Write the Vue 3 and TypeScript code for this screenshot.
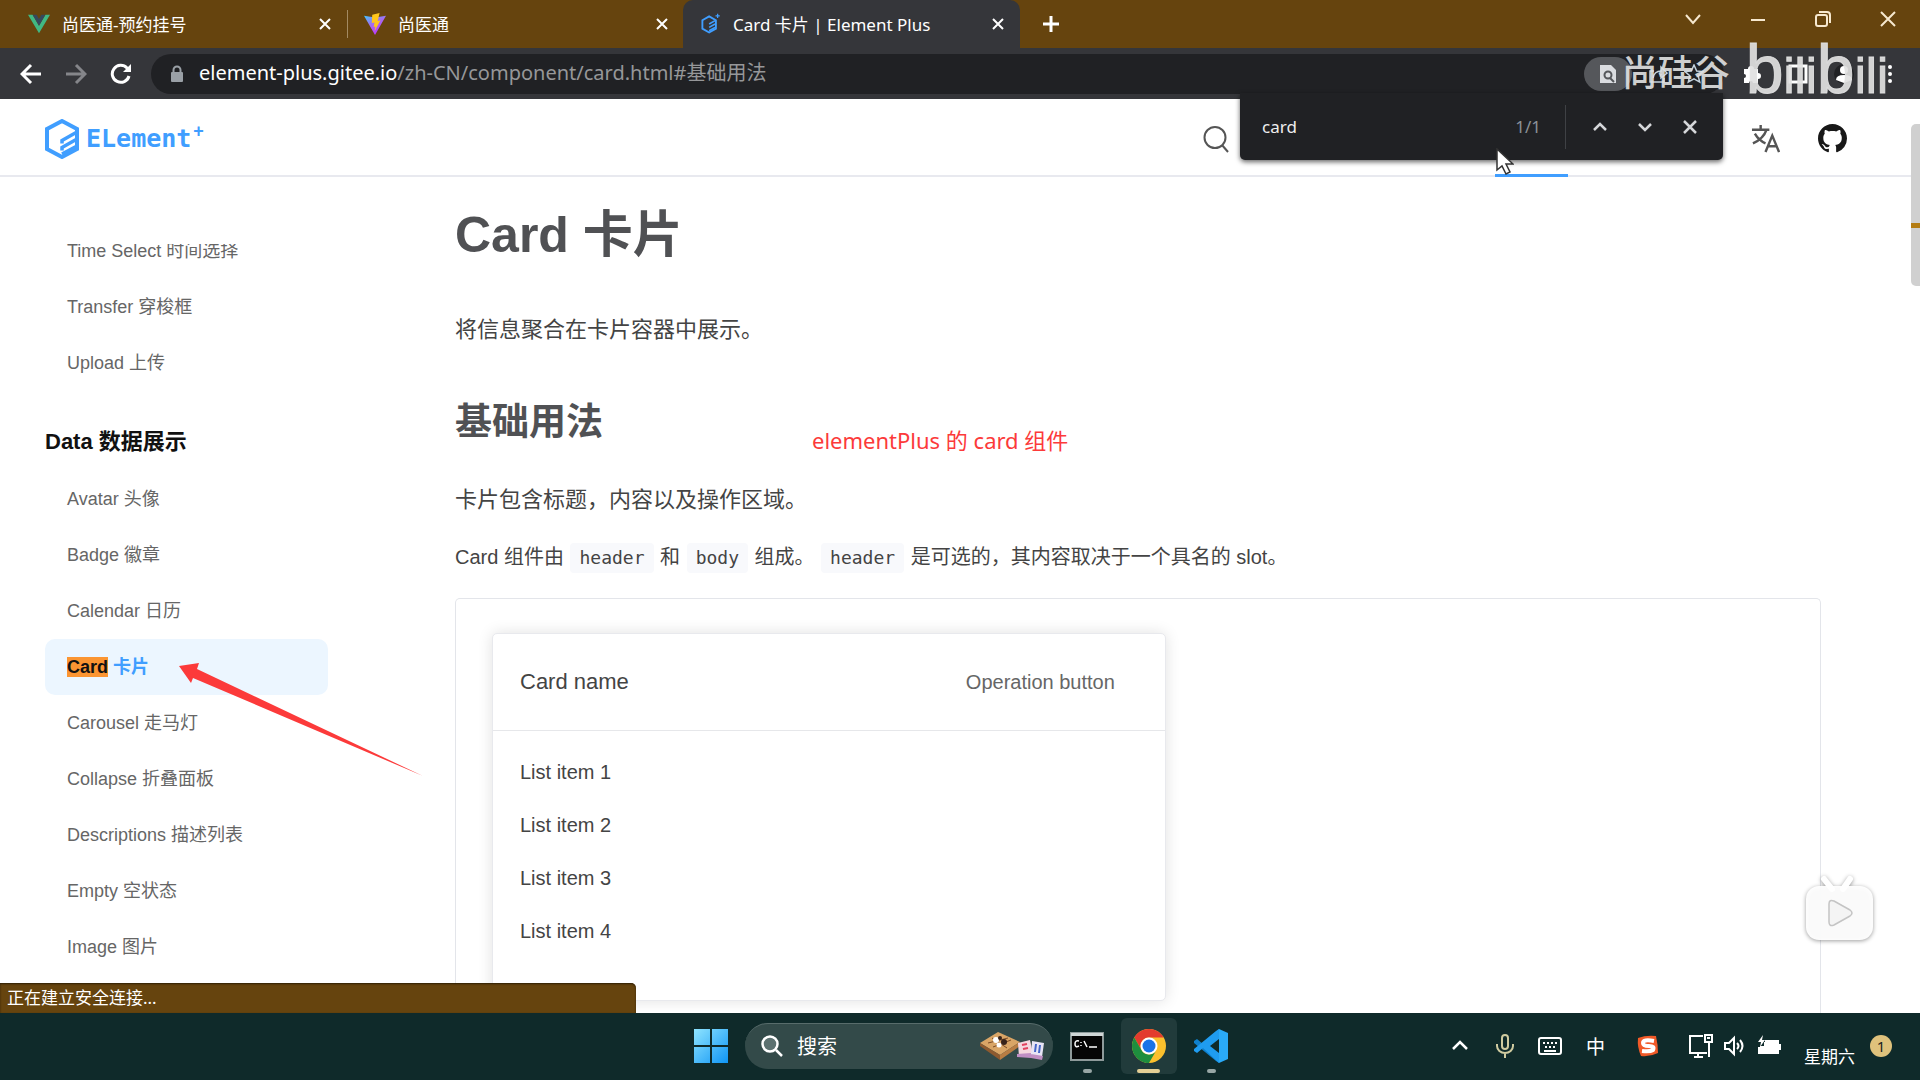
<script setup lang="ts">
import { ref } from 'vue'

interface MenuItem {
  name: string
  label: string
}

const formItems: MenuItem[] = [
  { name: 'Time Select', label: '时间选择' },
  { name: 'Transfer', label: '穿梭框' },
  { name: 'Upload', label: '上传' },
]

const dataItems: MenuItem[] = [
  { name: 'Avatar', label: '头像' },
  { name: 'Badge', label: '徽章' },
  { name: 'Calendar', label: '日历' },
  { name: 'Card', label: '卡片' },
  { name: 'Carousel', label: '走马灯' },
  { name: 'Collapse', label: '折叠面板' },
  { name: 'Descriptions', label: '描述列表' },
  { name: 'Empty', label: '空状态' },
  { name: 'Image', label: '图片' },
]

const active = ref('Card')
const keyword = ref('card')
const taskQuery = ref('')
const listCount = 4
</script>

<template>
  <div class="desktop">
    <!-- tab strip -->
    <header class="tabs">
      <div class="tab first">
        <svg class="fav" viewBox="0 0 24 22"><path d="M0 1h5l7 12 7-12h5L12 21z" fill="#41b883" /><path d="M5 1h4.500l2.500 4.500L14.500 1H19l-7 12z" fill="#35495e" /></svg>
        <span class="tab-title">尚医通-预约挂号</span>
        <button class="tab-close" aria-label="关闭标签页"><svg viewBox="0 0 12 12"><path d="M1 1l10 10M11 1L1 11" /></svg></button>
      </div>
      <div class="tab second">
        <svg class="fav" viewBox="0 0 24 24">
          <defs>
            <linearGradient id="vite" x1="0" y1="0" x2=".6" y2="1"><stop offset="0" stop-color="#41c8ff" /><stop offset=".5" stop-color="#a66bf0" /><stop offset="1" stop-color="#bd34fe" /></linearGradient>
          </defs>
          <path d="M0 3l12 2 12-2-12 21z" fill="url(#vite)" /><path d="M17 0L9 2l-.5 9 3-.7-1 5 2-.5-1 5L18 8l-3 .6z" fill="#ffc61c" />
        </svg>
        <span class="tab-title">尚医通</span>
        <button class="tab-close" aria-label="关闭标签页"><svg viewBox="0 0 12 12"><path d="M1 1l10 10M11 1L1 11" /></svg></button>
      </div>
      <div class="tab current">
        <svg class="fav" viewBox="0 0 24 26" fill="none" stroke="#409eff">
          <path d="M11 4L3 8.500v10L11 23l8-4.500v-10z" stroke-width="2.200" /><path d="M18 9l-7 4M18 13l-7 4M18 17l-7 4" stroke-width="2" /><path d="M21 1v5M18.500 3.500h5" stroke-width="1.500" />
        </svg>
        <span class="tab-title">Card 卡片 | Element Plus</span>
        <button class="tab-close" aria-label="关闭标签页"><svg viewBox="0 0 12 12"><path d="M1 1l10 10M11 1L1 11" /></svg></button>
      </div>
      <button class="new-tab" aria-label="新标签页"><svg viewBox="0 0 18 18"><path d="M9 1v16M1 9h16" /></svg></button>
      <div class="window-controls">
        <button aria-label="搜索标签页"><svg viewBox="0 0 16 16"><path d="M1 4l7 8 7-8" /></svg></button>
        <button aria-label="最小化"><svg viewBox="0 0 16 16"><path d="M1 9h14" /></svg></button>
        <button aria-label="还原"><svg viewBox="0 0 16 16"><rect x="1" y="4" width="11" height="11" rx="2" /><path d="M4 1h8q3 0 3 3v8" /></svg></button>
        <button aria-label="关闭"><svg viewBox="0 0 16 16"><path d="M1 1l14 14M15 1L1 15" /></svg></button>
      </div>
    </header>

    <!-- address bar -->
    <div class="toolbar">
      <button class="nav" aria-label="后退"><svg viewBox="0 0 22 22"><path d="M21 11H3M11 2l-9 9 9 9" /></svg></button>
      <button class="nav dim" aria-label="前进"><svg viewBox="0 0 22 22"><path d="M1 11h18M11 2l9 9-9 9" /></svg></button>
      <button class="nav" aria-label="重新加载"><svg viewBox="0 0 22 22"><path d="M19 13a8.500 8.500 0 1 1-2-8l2 2" /><path d="M21 1v8h-8z" fill="#fff" stroke="none" /></svg></button>
      <div class="address">
        <svg class="lock" viewBox="0 0 14 18"><path d="M3.500 8V5a3.500 3.500 0 0 1 7 0v3" fill="none" stroke="#9aa0a6" stroke-width="2" /><rect x="1" y="7" width="12" height="10" rx="1" fill="#9aa0a6" /></svg>
        <span class="url"><b>element-plus.gitee.io</b>/zh-CN/component/card.html#基础用法</span>
        <div class="address-tools">
          <span class="find-chip"><svg viewBox="0 0 18 20"><path d="M1 1h11l5 5v13H1z" fill="#dadce0" /><circle cx="9" cy="11" r="3.500" fill="none" stroke="#55575b" stroke-width="2" /><path d="M11 14l4 4" stroke="#55575b" stroke-width="2" /></svg></span>
          <svg class="tool" viewBox="0 0 20 20"><path d="M6 7H2v11h14v-4M5 14c1-5 4-7 8-7V3l6 6-6 5v-4" /></svg>
          <svg class="tool" viewBox="0 0 20 20"><path d="M10 1l2.700 6 6.300.6-4.800 4.200 1.500 6.300L10 14.800 4.300 18l1.500-6.200L1 7.600 7.300 7z" /></svg>
        </div>
      </div>
      <div class="extensions">
        <svg viewBox="0 0 20 20"><path d="M2 5h4a3 3 0 0 1 6 0h4v4a3 3 0 0 1 0 6v4h-5a2 2 0 0 0-4 0H2v-5a2 2 0 0 0 0-4z" fill="#fff" /></svg>
        <svg viewBox="0 0 20 20"><path d="M2 2h16v16H2z" fill="none" stroke="#fff" stroke-width="3" /></svg>
        <svg viewBox="0 0 20 20"><circle cx="10" cy="10" r="10" fill="#202124" /><circle cx="10" cy="6" r="4" fill="#fff" /><path d="M2 16q0-5 8-5t8 5l-8 3z" fill="#fff" /></svg>
        <svg viewBox="0 0 20 20" fill="#fff"><circle cx="10" cy="3" r="2" /><circle cx="10" cy="10" r="2" /><circle cx="10" cy="17" r="2" /></svg>
      </div>
    </div>

    <!-- document -->
    <div class="page">
      <header class="site-header">
        <a class="brand" href="#">
          <svg class="mark" viewBox="0 0 36 40" fill="none" stroke="#409eff">
            <path d="M33 30l-15 8L3 30V10l15-8 15 8z" stroke-width="4" /><path d="M33 13l-15 8.500v3M33 20l-15 8.500v3M33 27l-15 8" stroke-width="3.500" />
          </svg>
          <span class="word">ELement</span><sup class="plus">+</sup>
        </a>
        <nav class="site-nav">
          <button class="icon-button search" aria-label="搜索"><svg viewBox="0 0 26 28"><circle cx="12" cy="12.500" r="10.500" /><path d="M19 20l6 7" /></svg></button>
          <a class="nav-current" href="#" aria-label="组件"></a>
          <button class="icon-button" aria-label="语言"><svg viewBox="0 0 30 30"><path d="M1 6h18M10 1v5M16 6Q13 15 2 20M4 10q4 7 11 10" stroke-width="2.500" /><path d="M15 29l7-17 7 17M18 23h8" stroke-width="2.500" /></svg></button>
          <a class="icon-button" href="#" aria-label="GitHub"><svg viewBox="0 0 16 16"><path stroke="none" fill="#181818" d="M8 0C3.580 0 0 3.580 0 8c0 3.540 2.290 6.530 5.470 7.590.4.070.55-.17.55-.38 0-.19-.01-.82-.01-1.490-2.010.37-2.530-.49-2.690-.94-.09-.23-.48-.94-.82-1.130-.28-.15-.68-.52-.01-.53.63-.01 1.080.58 1.230.82.72 1.210 1.870.87 2.330.66.07-.52.28-.87.51-1.070-1.780-.2-3.640-.89-3.640-3.950 0-.87.31-1.590.82-2.150-.08-.2-.36-1.020.08-2.120 0 0 .67-.21 2.200.82.64-.18 1.320-.27 2-.27s1.360.09 2 .27c1.530-1.040 2.200-.82 2.200-.82.44 1.100.16 1.920.08 2.120.51.56.82 1.270.82 2.150 0 3.070-1.870 3.750-3.650 3.950.29.25.54.73.54 1.480 0 1.070-.01 1.930-.01 2.200 0 .21.15.46.55.38A8.010 8.010 0 0 0 16 8c0-4.420-3.580-8-8-8z" /></svg></a>
        </nav>
      </header>

      <div class="columns">
        <aside class="sidebar">
          <ul class="menu lead">
            <li v-for="item in formItems" :key="item.name"><a href="#">{{ item.name }} {{ item.label }}</a></li>
          </ul>
          <h4 class="group">Data 数据展示</h4>
          <ul class="menu">
            <li v-for="item in dataItems" :key="item.name">
              <a v-if="item.name === active" class="active" href="#"><mark>{{ item.name }}</mark> {{ item.label }}</a>
              <a v-else href="#" @click.prevent="active = item.name">{{ item.name }} {{ item.label }}</a>
            </li>
          </ul>
        </aside>

        <main class="content">
          <h1>Card 卡片</h1>
          <p class="lede">将信息聚合在卡片容器中展示。</p>
          <h2>基础用法</h2>
          <p class="lede">卡片包含标题，内容以及操作区域。</p>
          <p class="note">Card 组件由 <code>header</code> 和 <code>body</code> 组成。 <code>header</code> 是可选的，其内容取决于一个具名的 slot。</p>
          <section class="demo">
            <article class="card">
              <div class="card-header">
                <span class="card-name">Card name</span>
                <button class="operation">Operation button</button>
              </div>
              <div class="card-body">
                <div v-for="n in listCount" :key="n" class="row">List item {{ n }}</div>
              </div>
            </article>
          </section>
        </main>
      </div>

      <div class="scroll-thumb"><i></i></div>
      <div class="status">正在建立安全连接...</div>
    </div>

    <!-- find in page -->
    <div class="findbar">
      <input v-model="keyword" aria-label="查找" />
      <span class="count">1/1</span>
      <div class="find-actions">
        <button aria-label="上一个"><svg viewBox="0 0 16 16"><path d="M2 11l6-6 6 6" /></svg></button>
        <button aria-label="下一个"><svg viewBox="0 0 16 16"><path d="M2 5l6 6 6-6" /></svg></button>
        <button aria-label="关闭查找栏"><svg viewBox="0 0 16 16"><path d="M2 2l12 12M14 2L2 14" /></svg></button>
      </div>
    </div>

    <!-- taskbar -->
    <footer class="taskbar">
      <div class="apps">
        <button class="start" aria-label="开始">
          <svg viewBox="0 0 34 34"><defs><linearGradient id="win" x1="0" y1="0" x2="1" y2="1"><stop offset="0" stop-color="#8fe4ff" /><stop offset="1" stop-color="#0f95f5" /></linearGradient></defs><path d="M0 0h16v16H0zM18 0h16v16H18zM0 18h16v16H0zM18 18h16v16H18z" fill="url(#win)" /></svg>
        </button>
        <label class="task-search">
          <svg class="lens" viewBox="0 0 22 22"><circle cx="9" cy="9" r="7.500" fill="#5c7170" /><path d="M15 15l6 6" /></svg>
          <input v-model="taskQuery" placeholder="搜索" aria-label="搜索" />
          <svg class="game" viewBox="0 0 64 30"><path d="M0 12L18 1l22 10-20 13z" fill="#d9a566" /><path d="M0 12l20 12v5L0 15z" fill="#8e5a2f" /><path d="M20 24l20-13v4L20 29z" fill="#b97d43" /><path d="M8 12l20-5M13 16l18-7M12 7l15 10" stroke="#7a4a25" /><circle cx="16" cy="9" r="3" fill="#fff" /><circle cx="24" cy="11" r="3" fill="#37231a" /><circle cx="20" cy="7" r="2" fill="#37231a" /><circle cx="19" cy="14" r="2.500" fill="#fff" /><path d="M38 12l12-3 3 14-14 3z" fill="#f5d7df" /><path d="M52 10l12 2-2 14-11-2z" fill="#e8e4f5" /><path d="M37 23l14-1v5l-14-1zM51 23l12 2-1 4-11-2z" fill="#c08fc4" /><path d="M42 14l5-1M43 18l5-1" stroke="#e2425e" stroke-width="2" /><path d="M56 13l-1 8M60 14l-1 8" stroke="#4666c8" stroke-width="2" /></svg>
        </label>
        <button class="app" aria-label="终端">
          <svg viewBox="0 0 36 36"><rect x="2" y="5" width="32" height="27" fill="#050505" stroke="#8e9a9a" stroke-width="2" /><path d="M2 5h32v3H2z" fill="#cfd6d6" /><path d="M10 13q-4-1-4 3t4 2M12 14v1M12 17v1M15 13l3 6M20 19h8" fill="none" stroke="#fff" stroke-width="1.500" /></svg>
          <i></i>
        </button>
        <button class="app open" aria-label="Chrome">
          <svg viewBox="0 0 36 36"><circle cx="18" cy="18" r="17" fill="#fbc02d" /><path d="M3.300 9.500A17 17 0 0 1 32.700 9.500H18a8.500 8.500 0 0 0-7.400 12.700z" fill="#e33b2e" /><path d="M3.300 9.500A17 17 0 0 0 18 35l7.400-12.700a8.500 8.500 0 0 1-14.800 0z" fill="#1e8e3e" /><circle cx="18" cy="18" r="8.500" fill="#fff" /><circle cx="18" cy="18" r="6.500" fill="#1a73e8" /></svg>
          <i></i>
        </button>
        <button class="app" aria-label="VS Code">
          <svg viewBox="0 0 36 36"><path d="M26 1L10 16 4 11 1 13v2l22 18 3 2z" fill="#0f80cc" /><path d="M26 35L10 20l-6 5-3-2v-2L23 3l3-2z" fill="#1f9cf0" /><path d="M26 1l9 4v26l-9 4z" fill="#2aaaf8" /><path d="M26 11v14l-9-7z" fill="#0f2a2a" /></svg>
          <i></i>
        </button>
      </div>
      <div class="tray">
        <svg class="chev" viewBox="0 0 16 16"><path d="M1 11l7-7 7 7" stroke-width="2.500" /></svg>
        <svg class="mic" viewBox="0 0 18 24"><rect x="6" y="1" width="6" height="14" rx="3" /><path d="M1 10v2a8 7 0 0 0 16 0v-2M9 18v6" /></svg>
        <svg class="keys" viewBox="0 0 24 18"><rect x="1" y="1" width="22" height="16" rx="2" /><path d="M5 6h2M9 6h2M13 6h2M17 6h2M7 10h2M11 10h2M15 10h2M6 14h12" /></svg>
        <span class="ime">中</span>
        <svg class="sogou" viewBox="0 0 24 24"><path d="M2 4q8-3 18-2 2 9 2 17-8 4-17 3Q1 13 2 4z" fill="#f05a28" stroke="none" /><path d="M18 7q-11-2-11 2 0 3 6 3t4 4q-3 2-11 1" stroke="#fff" stroke-width="4" /></svg>
        <div class="system">
          <svg viewBox="0 0 24 24"><path d="M14 2H1v17h17M9 19v4M5 23h9M16 1h7v7h-7zM18 4h3M20 8v15" /></svg>
          <svg viewBox="0 0 24 24"><path d="M2 9h4l5-5v16l-5-5H2zM14 9q3 3 0 6M17 6q5 6 0 12" /></svg>
          <svg viewBox="0 0 24 24"><path d="M8 7h13v12H2v-6" /><path d="M8 9h11v8H4v-4h4z" fill="#fff" /><path d="M22 11h2v4h-2z" fill="#fff" /><path d="M6 1L1 8h3l-1 5 5-7H5z" fill="#fff" stroke="none" /></svg>
        </div>
        <span class="day">星期六</span>
        <span class="badge">1</span>
      </div>
    </footer>

    <!-- video overlay: author mark, notes, play control -->
    <div class="watermark"><span class="author">尚硅谷</span><span class="bili">b<small>ili</small>b<small>ili</small></span></div>
    <p class="annotation">elementPlus 的 card 组件</p>
    <svg class="arrow" viewBox="0 0 244 114"><path d="M0 3L20 0l-2 6 226 107L14 15l-2 5z" fill="#fc3a3a" /></svg>
    <svg class="pointer" viewBox="0 0 18 27"><path d="M1 1v21l5-4 4 8 4-2-4-8h7z" fill="#fff" stroke="#333" stroke-width="1.500" /></svg>
    <button class="play" aria-label="播放">
      <svg viewBox="0 0 80 80"><path d="M24 11l8 10M50 11l-7 10" stroke="#fff" stroke-width="6" stroke-linecap="round" /><rect x="6" y="18" width="67" height="54" rx="13" fill="#fff" fill-opacity=".95" /><path d="M29 36q0-5 5-3l16 9q4 3 0 6l-16 9q-5 2-5-3z" fill="#f4f4f4" stroke="#c4c4c4" stroke-width="1.500" /></svg>
    </button>
  </div>
</template>

<style>
body {
  margin: 0;
  overflow: hidden;
}
</style>

<style scoped>
* {
  box-sizing: border-box;
}
.desktop {
  position: relative;
  display: flex;
  flex-direction: column;
  height: 100vh;
  background: #fff;
  font-family: 'Noto Sans', 'Noto Sans CJK SC', sans-serif;
}
button {
  display: flex;
  align-items: center;
  justify-content: center;
  padding: 0;
  border: 0;
  background: none;
  font: inherit;
  color: inherit;
}
a {
  color: inherit;
  text-decoration: none;
}
input {
  min-width: 0;
  padding: 0;
  border: 0;
  outline: 0;
  background: none;
  font: inherit;
  color: inherit;
}
svg {
  display: block;
  flex: none;
}

/* tabs */
.tabs {
  display: flex;
  flex: none;
  height: 48px;
  background: #66440e;
  color: #fff;
}
.tab {
  display: flex;
  align-items: center;
  padding: 0 16px 0 28px;
  font-size: 17px;
}
.first {
  position: relative;
  width: 348px;
}
.first::after {
  content: '';
  position: absolute;
  right: 0;
  top: 10px;
  width: 1px;
  height: 28px;
  background: #a38a62;
}
.second {
  width: 335px;
  padding: 0 14px 0 16px;
}
.current {
  width: 337px;
  padding: 0 15px 0 16px;
  border-radius: 10px 10px 0 0;
  background: #35363a;
}
.fav {
  width: 22px;
  height: 22px;
  margin-right: 12px;
}
.tab-title {
  flex: 1;
  padding-bottom: 2px;
  white-space: nowrap;
}
.tab-close {
  width: 14px;
  height: 14px;
}
.tab-close svg {
  width: 12px;
  height: 12px;
  stroke: #fff;
  stroke-width: 2;
}
.new-tab {
  width: 62px;
}
.new-tab svg {
  width: 18px;
  height: 18px;
  stroke: #fff;
  stroke-width: 3;
}
.window-controls {
  display: flex;
  margin-left: auto;
  height: 38px;
}
.window-controls button {
  width: 65px;
}
.window-controls svg {
  width: 16px;
  height: 16px;
  fill: none;
  stroke: #f6e8cf;
  stroke-width: 2;
}

/* toolbar */
.toolbar {
  display: flex;
  flex: none;
  align-items: center;
  height: 51px;
  padding: 0 20px;
  background: #35363a;
}
.nav {
  width: 22px;
  height: 22px;
  margin-right: 23px;
}
.nav svg {
  width: 22px;
  height: 22px;
  fill: none;
  stroke: #fff;
  stroke-width: 3;
}
.dim svg {
  stroke: #85868a;
}
.address {
  display: flex;
  flex: 1;
  align-items: center;
  height: 40px;
  margin-left: -4px;
  padding: 0 20px 0 19px;
  border-radius: 20px;
  background: #202124;
}
.lock {
  width: 14px;
  height: 18px;
}
.url {
  flex: 1;
  margin-left: 15px;
  padding-bottom: 4px;
  font-size: 20px;
  white-space: nowrap;
  color: #969799;
}
.url b {
  font-weight: 400;
  color: #fff;
}
.address-tools {
  display: flex;
  align-items: center;
  gap: 16px;
}
.find-chip {
  display: flex;
  align-items: center;
  width: 48px;
  height: 34px;
  padding-left: 15px;
  border-radius: 17px;
  background: #55575b;
}
.find-chip svg {
  width: 18px;
  height: 20px;
}
.tool {
  width: 20px;
  height: 20px;
  fill: none;
  stroke: #c5d3de;
  stroke-width: 1.5;
}
.extensions {
  display: flex;
  gap: 26px;
  margin-left: 18px;
}
.extensions svg {
  width: 20px;
  height: 20px;
}

/* site */
.page {
  position: relative;
  display: flex;
  flex: 1;
  flex-direction: column;
  min-height: 0;
  overflow: hidden;
  background: #fff;
  font-family: 'Liberation Sans', 'Noto Sans CJK SC', sans-serif;
}
.site-header {
  display: flex;
  flex: none;
  justify-content: space-between;
  height: 78px;
  padding: 3px 73px 0 44px;
  border-bottom: 2px solid #e8e9ef;
}
.brand {
  display: flex;
  align-items: center;
  color: #409eff;
}
.mark {
  width: 36px;
  height: 40px;
}
.word {
  margin-left: 6px;
  font-family: 'DejaVu Sans Mono', monospace;
  font-size: 25px;
  font-weight: 700;
}
.plus {
  align-self: flex-start;
  margin: 16px 0 0 2px;
  font: 700 18px/26px 'Liberation Sans', sans-serif;
}
.site-nav {
  display: flex;
  align-items: center;
}
.icon-button svg {
  width: 29px;
  height: 29px;
  fill: none;
  stroke: #555;
}
.icon-button {
  margin-right: 38px;
}
.icon-button:last-child {
  margin-right: 0;
}
.search {
  margin-right: 266px;
}
.search svg {
  width: 26px;
  height: 28px;
  stroke-width: 2;
}
.nav-current {
  align-self: flex-end;
  width: 73px;
  height: 3px;
  margin-right: 183px;
  margin-bottom: -2px;
  background: #409eff;
}
.columns {
  display: flex;
  flex: 1;
  min-height: 0;
}
.sidebar {
  flex: none;
  width: 328px;
  margin-top: 67px;
  padding-left: 45px;
  overflow: hidden;
}
.menu {
  margin: 0;
  padding: 0;
  list-style: none;
}
.lead {
  margin-top: -21px;
}
.menu a {
  display: block;
  height: 56px;
  padding-left: 22px;
  border-radius: 10px;
  font-size: 18px;
  line-height: 56px;
  color: #666;
}
.menu .active {
  background: #ecf6ff;
  color: #409eff;
  font-weight: 700;
}
mark {
  background: #fb9532;
  color: #111;
}
.group {
  margin: 0;
  padding: 37px 0 15px;
  font-size: 22px;
  line-height: 28px;
  color: #111;
}
.content {
  display: flex;
  flex: 1;
  flex-direction: column;
  min-width: 0;
  padding: 28px 99px 0 127px;
}
h1 {
  margin: 0 0 47px;
  font-size: 50px;
  line-height: 60px;
  color: #505154;
}
h2 {
  margin: 51px 0 35px;
  font-size: 37px;
  line-height: 48px;
  color: #505154;
}
.lede {
  margin: 0;
  font-size: 22px;
  line-height: 36px;
  color: #444;
}
.note {
  margin: 21px 0 23px;
  font-size: 20px;
  line-height: 36px;
  white-space: nowrap;
  color: #444;
}
code {
  display: inline-block;
  margin: 0 1px;
  padding: 0 9px;
  border-radius: 4px;
  background: #f8f9fc;
  font-family: 'DejaVu Sans Mono', monospace;
  font-size: 18px;
  line-height: 30px;
}
.demo {
  flex: 1;
  padding: 34px 36px 0;
  border: 1px solid #e3e5ea;
  border-bottom: 0;
  border-radius: 5px 5px 0 0;
}
.card {
  width: calc(52% + 2px);
  border: 1px solid #e8e9ed;
  border-radius: 5px;
  box-shadow: 0 0 15px rgba(0, 0, 0, 0.12);
  background: #fff;
  color: #444;
}
.card-header {
  display: flex;
  align-items: center;
  justify-content: space-between;
  height: 97px;
  padding: 0 50px 0 27px;
  border-bottom: 1px solid #e6e7ea;
}
.card-name {
  font-size: 22px;
}
.operation {
  font-size: 20px;
  color: #666;
}
.card-body {
  padding: 15px 27px 42px;
}
.row {
  font-size: 20px;
  line-height: 53px;
}
.scroll-thumb {
  position: absolute;
  right: 0;
  top: 25px;
  width: 9px;
  height: 162px;
  border-radius: 5px 0 0 5px;
  background: #d0d0d0;
}
.scroll-thumb i {
  display: block;
  height: 5px;
  margin-top: 99px;
  background: #b47c12;
}
.status {
  position: absolute;
  left: 0;
  bottom: 0;
  width: 636px;
  height: 30px;
  padding-left: 7px;
  border-radius: 0 5px 0 0;
  box-shadow: inset 0 1px 2px #2e1e05;
  background: #66440e;
  font: 17px/30px 'Noto Sans', 'Noto Sans CJK SC', sans-serif;
  color: #fff;
}

/* find bar */
.findbar {
  position: absolute;
  top: 93px;
  right: 197px;
  display: flex;
  align-items: center;
  width: 483px;
  height: 67px;
  padding: 0 25px 0 22px;
  border-radius: 0 0 5px 5px;
  box-shadow: 0 2px 5px rgba(0, 0, 0, 0.6);
  background: #202124;
  font-size: 17px;
  color: #eee;
}
.findbar input {
  flex: 1;
}
.count {
  margin-right: 24px;
  color: #8b9197;
}
.find-actions {
  display: flex;
  align-items: center;
  gap: 29px;
  height: 44px;
  padding-left: 26px;
  border-left: 1px solid #3f4145;
}
.find-actions svg {
  width: 16px;
  height: 16px;
  fill: none;
  stroke: #d5d7da;
  stroke-width: 2.5;
}

/* taskbar */
.taskbar {
  position: relative;
  display: flex;
  flex: none;
  align-items: center;
  justify-content: space-between;
  height: 67px;
  padding: 0 28px 2px 694px;
  background: #0f2a2a;
  color: #fff;
}
.apps,
.tray,
.system {
  display: flex;
  align-items: center;
}
.start svg {
  width: 34px;
  height: 34px;
}
.task-search {
  display: flex;
  align-items: center;
  width: 308px;
  height: 46px;
  margin: 0 6px 0 17px;
  padding: 0 9px 0 16px;
  border-top: 1px solid #586c6b;
  border-radius: 23px;
  background: #334a49;
  font-size: 20px;
}
.task-search input {
  flex: 1;
  margin-left: 14px;
}
.task-search input::placeholder {
  color: #fff;
  opacity: 1;
}
.lens {
  width: 22px;
  height: 22px;
  stroke: #fff;
  stroke-width: 2.5;
}
.game {
  width: 64px;
  height: 30px;
}
.app {
  position: relative;
  width: 56px;
  height: 56px;
  margin-right: 6px;
  border-radius: 6px;
}
.app svg {
  width: 36px;
  height: 36px;
}
.app i {
  position: absolute;
  bottom: 1px;
  left: 24px;
  width: 9px;
  height: 4px;
  border-radius: 2px;
  background: #97a6a5;
}
.open {
  background: #213b3b;
}
.open i {
  left: 16px;
  width: 23px;
  background: #e3cf95;
}
.tray svg {
  fill: none;
  stroke: #fff;
  stroke-width: 2;
}
.chev {
  width: 16px;
  height: 16px;
}
.tray .mic {
  width: 18px;
  height: 24px;
  margin-left: 28px;
  stroke: #cfcba0;
}
.keys {
  width: 24px;
  height: 18px;
  margin-left: 24px;
}
.ime {
  margin-left: 24px;
  font-size: 19px;
}
.sogou {
  width: 24px;
  height: 24px;
  margin-left: 31px;
}
.system {
  gap: 10px;
  margin-left: 29px;
}
.system svg {
  width: 24px;
  height: 24px;
}
.day {
  margin: 20px 15px 0 23px;
  font-size: 17px;
}
.badge {
  width: 22px;
  height: 22px;
  border-radius: 11px;
  background: #dfc27c;
  font-size: 15px;
  line-height: 22px;
  text-align: center;
  color: #222;
}

/* overlays */
.watermark {
  position: absolute;
  top: 25px;
  right: 32px;
  display: flex;
  align-items: center;
  gap: 16px;
  color: rgba(225, 225, 225, 0.92);
  line-height: 80px;
  white-space: nowrap;
  pointer-events: none;
}
.author {
  padding-bottom: 6px;
  font-size: 36px;
  font-weight: 500;
  font-family: 'Noto Sans CJK SC', sans-serif;
}
.bili {
  font: 68px/88px 'Liberation Sans', sans-serif;
  -webkit-text-stroke: 1px rgba(225, 225, 225, 0.9);
}
.bili small {
  font-size: 50px;
}
.annotation {
  position: absolute;
  top: 422px;
  left: 812px;
  margin: 0;
  font-size: 22px;
  line-height: 36px;
  color: #fc3a3a;
}
.arrow {
  position: absolute;
  top: 663px;
  left: 179px;
  width: 244px;
  height: 114px;
}
.pointer {
  position: absolute;
  top: 148px;
  left: 1496px;
  width: 18px;
  height: 27px;
}
.play {
  position: absolute;
  right: 40px;
  bottom: 132px;
}
.play svg {
  width: 80px;
  height: 80px;
  filter: drop-shadow(0 1px 2px rgba(0, 0, 0, 0.4));
}
</style>
